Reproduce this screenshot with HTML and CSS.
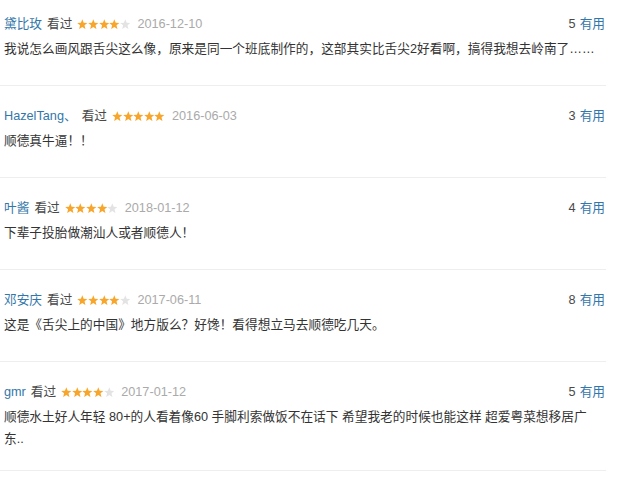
FILE: index.html
```html
<!DOCTYPE html>
<html lang="zh-CN">
<head>
<meta charset="utf-8">
<title>短评</title>
<link rel="stylesheet" href="styles.css">
</head>
<body>
<svg class="defs" width="0" height="0" aria-hidden="true">
  <defs>
    <symbol id="star" viewBox="0 0 10 10">
      <polygon points="5,0.2 6.3,3.5 9.8,3.7 7.1,5.9 7.95,9.5 5,7.5 2.05,9.5 2.9,5.9 0.2,3.7 3.7,3.5"/>
    </symbol>
  </defs>
</svg>
<div class="list">
  <div class="item">
    <div class="head">
      <div class="info">
        <span class="name">黛比玫</span><span class="watched">看过</span>
        <span class="stars">
          <svg class="on"><use href="#star"/></svg><svg class="on"><use href="#star"/></svg><svg class="on"><use href="#star"/></svg><svg class="on"><use href="#star"/></svg><svg class="off"><use href="#star"/></svg>
        </span>
        <span class="date">2016-12-10</span>
      </div>
      <div class="votes"><span class="count">5</span><span class="useful">有用</span></div>
    </div>
    <p class="text">我说怎么画风跟舌尖这么像，原来是同一个班底制作的，这部其实比舌尖2好看啊，搞得我想去岭南了……</p>
  </div>
  <div class="item">
    <div class="head">
      <div class="info">
        <span class="name">HazelTang、</span><span class="watched">看过</span>
        <span class="stars">
          <svg class="on"><use href="#star"/></svg><svg class="on"><use href="#star"/></svg><svg class="on"><use href="#star"/></svg><svg class="on"><use href="#star"/></svg><svg class="on"><use href="#star"/></svg>
        </span>
        <span class="date">2016-06-03</span>
      </div>
      <div class="votes"><span class="count">3</span><span class="useful">有用</span></div>
    </div>
    <p class="text">顺德真牛逼！！</p>
  </div>
  <div class="item">
    <div class="head">
      <div class="info">
        <span class="name">叶酱</span><span class="watched">看过</span>
        <span class="stars">
          <svg class="on"><use href="#star"/></svg><svg class="on"><use href="#star"/></svg><svg class="on"><use href="#star"/></svg><svg class="on"><use href="#star"/></svg><svg class="off"><use href="#star"/></svg>
        </span>
        <span class="date">2018-01-12</span>
      </div>
      <div class="votes"><span class="count">4</span><span class="useful">有用</span></div>
    </div>
    <p class="text">下辈子投胎做潮汕人或者顺德人！</p>
  </div>
  <div class="item">
    <div class="head">
      <div class="info">
        <span class="name">邓安庆</span><span class="watched">看过</span>
        <span class="stars">
          <svg class="on"><use href="#star"/></svg><svg class="on"><use href="#star"/></svg><svg class="on"><use href="#star"/></svg><svg class="on"><use href="#star"/></svg><svg class="off"><use href="#star"/></svg>
        </span>
        <span class="date">2017-06-11</span>
      </div>
      <div class="votes"><span class="count">8</span><span class="useful">有用</span></div>
    </div>
    <p class="text">这是《舌尖上的中国》地方版么？好馋！看得想立马去顺德吃几天。</p>
  </div>
  <div class="item tight">
    <div class="head">
      <div class="info">
        <span class="name">gmr</span><span class="watched">看过</span>
        <span class="stars">
          <svg class="on"><use href="#star"/></svg><svg class="on"><use href="#star"/></svg><svg class="on"><use href="#star"/></svg><svg class="on"><use href="#star"/></svg><svg class="off"><use href="#star"/></svg>
        </span>
        <span class="date">2017-01-12</span>
      </div>
      <div class="votes"><span class="count">5</span><span class="useful">有用</span></div>
    </div>
    <p class="text">顺德水土好人年轻 80+的人看着像60 手脚利索做饭不在话下 希望我老的时候也能这样 超爱粤菜想移居广东..</p>
  </div>
</div>
</body>
</html>
```

FILE: styles.css
```css
html, body {
  margin: 0;
  padding: 0;
  background: #ffffff;
}

body {
  font-family: "Liberation Sans", "Noto Sans CJK SC", sans-serif;
  font-size: 12.7px;
  color: #494949;
  overflow: hidden;
}

.defs {
  position: absolute;
  width: 0;
  height: 0;
}

.list {
  width: 606px;
}

.item {
  padding: 20px 1px 25px 4px;
  border-bottom: 1px solid #eeeeee;
}

.item:first-child {
  padding-top: 14px;
}

.item.tight {
  padding-bottom: 20px;
}

.head {
  display: flex;
  justify-content: space-between;
  align-items: center;
  height: 20px;
  line-height: 20px;
}

.info {
  display: flex;
  align-items: center;
  white-space: nowrap;
}

.name {
  color: #3377aa;
}

.watched {
  margin-left: 5px;
  color: #494949;
}

.stars {
  display: flex;
  align-items: center;
  margin-left: 5px;
  height: 20px;
}

.stars svg {
  width: 10.6px;
  height: 10.6px;
  display: block;
}

.stars .on {
  fill: #f8a62b;
}

.stars .off {
  fill: #e3e3e3;
}

.date {
  margin-left: 7px;
  color: #aaaaaa;
}

.votes {
  white-space: nowrap;
}

.count {
  color: #494949;
  margin-right: 4px;
}

.useful {
  color: #3377aa;
}

.text {
  margin: 4px 0 0;
  line-height: 22px;
  color: #333333;
}
```
